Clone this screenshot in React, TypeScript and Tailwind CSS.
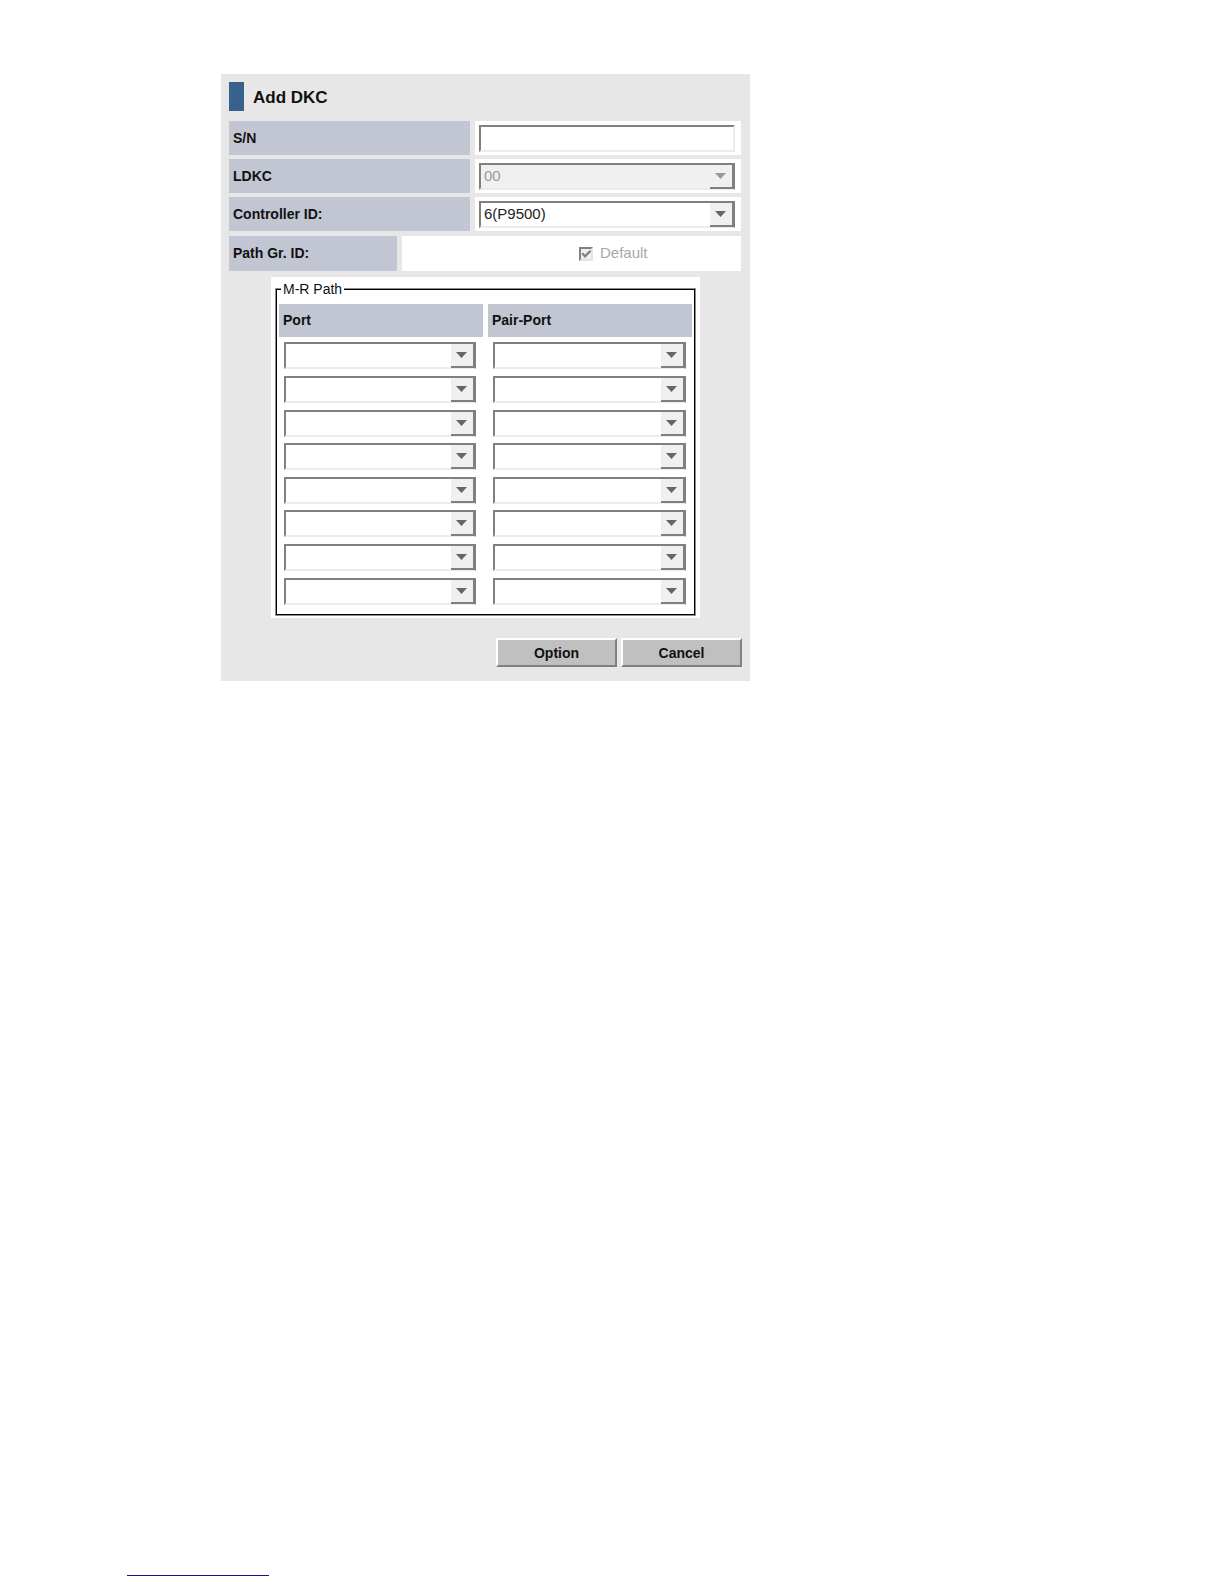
import { useState, type ReactNode } from "react";

const controllers = ["6(P9500)", "5(XP24000)"];
const pathRows = [1, 2, 3, 4, 5, 6, 7, 8];

type SelectBoxProps = {
  id: string;
  label: string;
  options: string[];
  disabled?: boolean;
};

function SelectBox({ id, label, options, disabled = false }: SelectBoxProps) {
  return (
    <div className="relative h-[27px] w-full">
      <select
        id={id}
        aria-label={label}
        disabled={disabled}
        className="block h-full w-full appearance-none rounded-none border-2 border-[#808080] border-b-[#ececec] bg-white pl-[3px] pr-6 text-[15px] leading-[22px] text-[#222222] opacity-100 outline-none disabled:bg-[#f0f0f0] disabled:text-[#9a9a9a]"
      >
        {options.map((option) => (
          <option key={option}>{option}</option>
        ))}
      </select>
      <span
        className={`pointer-events-none absolute top-[2px] right-0 flex h-6 w-[25px] items-center justify-center border-r-[3px] border-b-2 border-[#808080] bg-[#f0f0f0] pr-px ${disabled ? "text-[#9a9a9a]" : "text-[#666666]"}`}
      >
        <svg width="11" height="6" viewBox="0 0 11 6" fill="currentColor" aria-hidden="true">
          <path d="M0 0h11L5.5 6z" />
        </svg>
      </span>
    </div>
  );
}

function FieldRow({ id, label, children }: { id: string; label: string; children: ReactNode }) {
  return (
    <div className="flex h-[34px] gap-[5px]">
      <label
        htmlFor={id}
        className="flex w-[241px] shrink-0 items-center bg-[#c2c6d2] px-1 pt-px font-bold"
      >
        {label}
      </label>
      <div className="flex flex-1 items-center bg-white pr-[6px] pl-1">{children}</div>
    </div>
  );
}

function PathTable() {
  return (
    <table className="h-[304px] w-full table-fixed border-separate border-spacing-0">
      <colgroup>
        <col className="w-[209px]" />
        <col />
      </colgroup>
      <thead>
        <tr className="h-[35px]">
          <th className="border-r-[5px] border-b-2 border-white bg-[#c2c6d2] px-1 text-left">
            Port
          </th>
          <th className="border-b-2 border-white bg-[#c2c6d2] px-1 text-left">Pair-Port</th>
        </tr>
      </thead>
      <tbody>
        {pathRows.map((row) => (
          <tr key={row}>
            <td className="pr-3 pl-[5px]">
              <SelectBox id={`port-${row}`} label={`Port ${row}`} options={[""]} />
            </td>
            <td className="pr-[6px] pl-[5px]">
              <SelectBox id={`pair-port-${row}`} label={`Pair-Port ${row}`} options={[""]} />
            </td>
          </tr>
        ))}
      </tbody>
    </table>
  );
}

function DialogButton({ children }: { children: ReactNode }) {
  return (
    <button
      type="button"
      className="h-[29px] w-[121px] border-2 border-[#808080] border-t-white border-l-white bg-[#c0c0c0] leading-5 font-bold"
    >
      {children}
    </button>
  );
}

export default function App() {
  const [serial, setSerial] = useState("");

  return (
    <div className="flex min-h-screen flex-col bg-white pt-[74px] pb-2 font-['Liberation_Sans',Arial,sans-serif] text-[14px] text-[#111111]">
      <main className="ml-[221px] w-full max-w-[529px] bg-[#e7e7e7] px-2 pt-2 pb-[14px]">
        <header className="flex h-[29px] items-center gap-[9px]">
          <span className="h-full w-[15px] bg-[#38618c]" />
          <h1 className="pt-[3px] text-[17px] font-bold">Add DKC</h1>
        </header>

        <form className="mt-[10px]">
          <div className="flex flex-col gap-1 pr-px">
            <FieldRow id="serial" label="S/N">
              <input
                id="serial"
                type="text"
                value={serial}
                onChange={(e) => setSerial(e.target.value)}
                className="h-[27px] w-full border-2 border-[#808080] border-r-[#ececec] border-b-[#ececec] bg-white px-[3px] text-[15px] outline-none"
              />
            </FieldRow>
            <FieldRow id="ldkc" label="LDKC">
              <SelectBox id="ldkc" label="LDKC" options={["00"]} disabled />
            </FieldRow>
            <FieldRow id="controller" label="Controller ID:">
              <SelectBox id="controller" label="Controller ID" options={controllers} />
            </FieldRow>
          </div>

          <div className="mt-[5px] flex h-[35px] gap-[5px] pr-px">
            <div className="flex w-[168px] items-center bg-[#c2c6d2] px-1 font-bold">
              Path Gr. ID:
            </div>
            <label className="flex flex-1 items-center gap-[7px] bg-white pl-[177px] text-[15px] text-[#a8a8a8]">
              <span className="relative h-[14px] w-[14px]">
                <input
                  type="checkbox"
                  defaultChecked
                  disabled
                  className="block h-full w-full appearance-none border-2 border-[#808080] border-r-[#e4e4e4] border-b-[#e4e4e4] bg-[#f0f0f0]"
                />
                <svg
                  className="absolute inset-0"
                  width="14"
                  height="14"
                  viewBox="0 0 14 14"
                  fill="none"
                  stroke="#808080"
                  strokeWidth="2.2"
                  aria-hidden="true"
                >
                  <path d="M3.2 6.2 6 9.4l5.6-5.6" />
                </svg>
              </span>
              Default
            </label>
          </div>

          <div className="mx-[42px] mt-[6px] bg-white px-[5px] pt-[3px] pb-[3px]">
            <fieldset className="border border-black px-[2px] pb-[6px] shadow-[0_0_0_1px_#8c8c8c]">
              <legend className="ml-[2px] bg-white px-[2px] leading-[18px]">M-R Path</legend>
              <div className="pt-[6px]">
                <PathTable />
              </div>
            </fieldset>
          </div>

          <div className="mt-5 flex justify-end gap-1">
            <DialogButton>Option</DialogButton>
            <DialogButton>Cancel</DialogButton>
          </div>
        </form>
      </main>

      <footer className="mt-auto ml-[127px]">
        <a href="#" aria-label="Back to contents" className="block h-4 w-[142px] border-b border-[#1010a0]" />
      </footer>
    </div>
  );
}
